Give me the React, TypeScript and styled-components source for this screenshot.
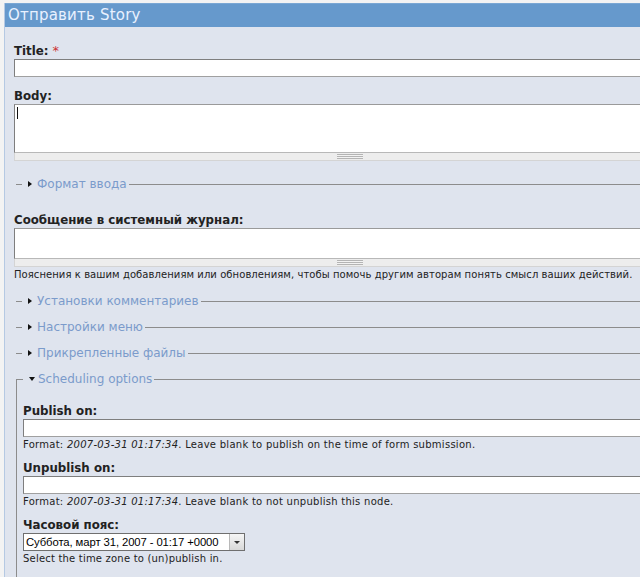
import React from "react";
import styled, { createGlobalStyle } from "styled-components";

const GlobalStyle = createGlobalStyle`
  html, body {
    margin: 0;
    padding: 0;
    background: #f3f3f3;
    overflow: hidden;
  }
  body {
    font-family: "DejaVu Sans", Verdana, sans-serif;
    color: #222;
  }
`;

const Page = styled.div`
  padding: 3px 0 0 4px;
  width: 720px;
`;

const Panel = styled.div`
  border-left: 1px solid #b5c9e3;
  background: #dfe4ee;
  min-height: 600px;
`;

const Header = styled.h2`
  margin: 0;
  height: 24px;
  padding-left: 3px;
  background: #6699cc;
  border-top: 1px solid #7aa7d4;
  box-sizing: border-box;
  color: #e9f1ff;
  font-size: 15px;
  font-weight: normal;
  letter-spacing: 0.2px;
  line-height: 22px;
`;

const Content = styled.form`
  padding: 16px 0 0 9px;
`;

const FormItem = styled.div<{ $gap?: number }>`
  margin-bottom: ${({ $gap }) => $gap ?? 12}px;
`;

const Label = styled.label`
  display: block;
  font-size: 11.8px;
  font-weight: bold;
  line-height: 15px;
  color: #222;
`;

const Required = styled.span`
  color: #cc3333;
  font-weight: normal;
  font-size: 13px;
`;

const TextInput = styled.input`
  display: block;
  box-sizing: border-box;
  width: ${({ width }) => width ?? 672}px;
  height: 18px;
  margin: 0;
  padding: 0 2px;
  background: #fff;
  border: 1px solid;
  border-color: #7e7e7e #a8a8a8 #a0a0a0 #7e7e7e;
  outline: none;
`;

const AreaWrap = styled.div`
  position: relative;
  width: 672px;
`;

const TextArea = styled.textarea<{ $h: number }>`
  display: block;
  box-sizing: border-box;
  width: 100%;
  height: ${({ $h }) => $h}px;
  margin: 0;
  padding: 2px;
  resize: none;
  background: #fff;
  border: 1px solid;
  border-color: #9a9a9a #c4c4c4 #b8b8b8 #7e7e7e;
  outline: none;
`;

const Caret = styled.span`
  position: absolute;
  left: 3px;
  top: 3px;
  width: 1px;
  height: 12px;
  background: #111;
`;

const Grippie = styled.div`
  height: 8px;
  background: #ededed;
  border: 1px solid #d4d4d4;
  border-top: none;
  box-sizing: border-box;
  display: flex;
  justify-content: center;
  align-items: center;
`;

const GripHandle = styled.span`
  width: 26px;
  height: 5px;
  background: repeating-linear-gradient(
    to bottom,
    #b4b4b4 0,
    #b4b4b4 1px,
    #f2f2f2 1px,
    #f2f2f2 2px
  );
`;

const Description = styled.div<{ $spacing?: number }>`
  margin-top: 1px;
  font-size: 10px;
  line-height: 13px;
  letter-spacing: ${({ $spacing }) => $spacing ?? 0.07}px;
  color: #222;

  em {
    font-style: italic;
  }
`;

const Fieldset = styled.fieldset<{ $open?: boolean; $gap?: number }>`
  margin: 0 0 ${({ $gap }) => $gap ?? 12}px 2px;
  padding: 0 0 0 6px;
  border: none;
  border-top: 1px solid #8c8c8c;
  border-left: ${({ $open }) => ($open ? "1px solid #8c8c8c" : "none")};
  min-width: 0;
`;

const Legend = styled.legend`
  padding: 0 2px 0 6px;
  font-size: 12px;
  line-height: 14px;
  color: #7b9bcb;
  display: flex;
  align-items: center;
`;

const Arrow = styled.span<{ $open?: boolean }>`
  display: inline-block;
  width: 0;
  height: 0;
  margin-right: ${({ $open }) => ($open ? 3 : 5)}px;
  border-style: solid;
  border-color: transparent;
  ${({ $open }) =>
    $open
      ? "border-width: 4px 3px 0 3px; border-top-color: #111;"
      : "border-width: 3px 0 3px 4px; border-left-color: #111;"}
`;

const FieldsetBody = styled.div`
  padding-top: 18px;
`;

const Select = styled.div`
  display: flex;
  box-sizing: border-box;
  width: 222px;
  height: 18px;
  background: #fff;
  border: 1px solid #6f6f6f;
`;

const SelectValue = styled.span`
  flex: 1;
  padding-left: 2px;
  font-family: "Liberation Sans", Arial, sans-serif;
  font-size: 11.3px;
  letter-spacing: -0.1px;
  line-height: 16px;
  color: #000;
  white-space: nowrap;
  overflow: hidden;
`;

const SelectButton = styled.span`
  width: 14px;
  flex: none;
  background: linear-gradient(#f6f6f6, #d8d8d8);
  border-left: 1px solid #b8b8b8;
  display: flex;
  align-items: center;
  justify-content: center;

  &::after {
    content: "";
    border-style: solid;
    border-color: #333 transparent transparent transparent;
    border-width: 3px 3px 0 3px;
  }
`;

const Collapsed: React.FC<{ title: string; gap?: number }> = ({ title, gap }) => (
  <Fieldset $gap={gap}>
    <Legend>
      <Arrow />
      {title}
    </Legend>
  </Fieldset>
);

export default function App(): React.ReactElement {
  return (
    <>
      <GlobalStyle />
      <Page>
        <Panel>
          <Header>Отправить Story</Header>
          <Content>
            <FormItem>
              <Label>
                Title: <Required>*</Required>
              </Label>
              <TextInput type="text" />
            </FormItem>

            <FormItem $gap={16}>
              <Label>Body:</Label>
              <AreaWrap>
                <TextArea $h={49} />
                <Caret />
                <Grippie>
                  <GripHandle />
                </Grippie>
              </AreaWrap>
            </FormItem>

            <Collapsed title="Формат ввода" gap={22} />

            <FormItem $gap={13}>
              <Label>Сообщение в системный журнал:</Label>
              <AreaWrap>
                <TextArea $h={31} />
                <Grippie>
                  <GripHandle />
                </Grippie>
              </AreaWrap>
              <Description>
                Пояснения к вашим добавлениям или обновлениям, чтобы помочь другим авторам понять
                смысл ваших действий.
              </Description>
            </FormItem>

            <Collapsed title="Установки комментариев" />
            <Collapsed title="Настройки меню" />
            <Collapsed title="Прикрепленные файлы" />

            <Fieldset $open>
              <Legend>
                <Arrow $open />
                Scheduling options
              </Legend>
              <FieldsetBody>
                <FormItem $gap={10}>
                  <Label>Publish on:</Label>
                  <TextInput type="text" width={664} />
                  <Description $spacing={0.27}>
                    Format: <em>2007-03-31 01:17:34</em>. Leave blank to publish on the time of form
                    submission.
                  </Description>
                </FormItem>
                <FormItem $gap={10}>
                  <Label>Unpublish on:</Label>
                  <TextInput type="text" width={664} />
                  <Description $spacing={0.27}>
                    Format: <em>2007-03-31 01:17:34</em>. Leave blank to not unpublish this node.
                  </Description>
                </FormItem>
                <FormItem>
                  <Label>Часовой пояс:</Label>
                  <Select>
                    <SelectValue>Суббота, март 31, 2007 - 01:17 +0000</SelectValue>
                    <SelectButton />
                  </Select>
                  <Description $spacing={0.2}>Select the time zone to (un)publish in.</Description>
                </FormItem>
              </FieldsetBody>
            </Fieldset>
          </Content>
        </Panel>
      </Page>
    </>
  );
}
